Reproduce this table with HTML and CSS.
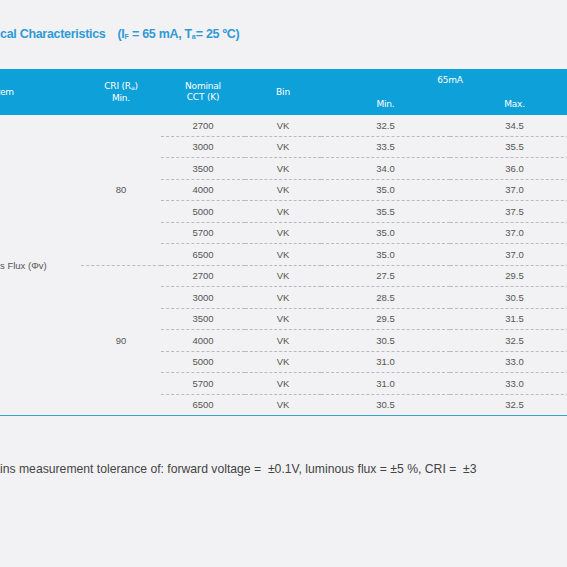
FILE: index.html
```html
<!DOCTYPE html>
<html lang="en">
<head>
<meta charset="utf-8">
<title>Electrical Characteristics</title>
<link rel="stylesheet" href="styles.css">
</head>
<body>
<main class="page">
  <h2 class="title"><span class="cut">Electri</span>cal Characteristics<span class="cond">(I<sub>F</sub> = 65 mA, T<sub>a</sub>= 25 ºC)</span></h2>
  <table class="spec">
    <thead>
      <tr>
        <th class="c-item" rowspan="2"><span class="cut">It</span>em</th>
        <th class="c-cri" rowspan="2">CRI (R<sub>a</sub>)<br>Min.</th>
        <th class="c-cct" rowspan="2">Nominal<br>CCT (K)</th>
        <th class="c-bin" rowspan="2">Bin</th>
        <th colspan="2">65mA</th>
      </tr>
      <tr>
        <th class="c-min">Min.</th>
        <th class="c-max">Max.</th>
      </tr>
    </thead>
    <tbody>
      <tr><td class="c-item" rowspan="14"><span class="cut">Luminou</span>s Flux (Φv)</td><td class="grp" rowspan="7">80</td><td>2700</td><td>VK</td><td>32.5</td><td>34.5</td></tr>
      <tr><td>3000</td><td>VK</td><td>33.5</td><td>35.5</td></tr>
      <tr><td>3500</td><td>VK</td><td>34.0</td><td>36.0</td></tr>
      <tr><td>4000</td><td>VK</td><td>35.0</td><td>37.0</td></tr>
      <tr><td>5000</td><td>VK</td><td>35.5</td><td>37.5</td></tr>
      <tr><td>5700</td><td>VK</td><td>35.0</td><td>37.0</td></tr>
      <tr><td>6500</td><td>VK</td><td>35.0</td><td>37.0</td></tr>
      <tr><td class="grp grp-last" rowspan="7">90</td><td>2700</td><td>VK</td><td>27.5</td><td>29.5</td></tr>
      <tr><td>3000</td><td>VK</td><td>28.5</td><td>30.5</td></tr>
      <tr><td>3500</td><td>VK</td><td>29.5</td><td>31.5</td></tr>
      <tr><td>4000</td><td>VK</td><td>30.5</td><td>32.5</td></tr>
      <tr><td>5000</td><td>VK</td><td>31.0</td><td>33.0</td></tr>
      <tr><td>5700</td><td>VK</td><td>31.0</td><td>33.0</td></tr>
      <tr class="last"><td>6500</td><td>VK</td><td>30.5</td><td>32.5</td></tr>
    </tbody>
  </table>
  <p class="note"><span class="cut">Note: Nationstar mainta</span>ins measurement tolerance of: forward voltage = &nbsp;±0.1V, luminous flux = ±5 %, CRI = &nbsp;±3</p>
</main>
</body>
</html>
```
FILE: styles.css
```css
html, body {
  margin: 0;
  padding: 0;
  overflow: hidden;
  background: #f2f2f4;
}
.page {
  width: 579px;
  padding-top: 26px;
  font-family: "Liberation Sans", Arial, sans-serif;
  color: #555;
}
.cut {
  display: inline-block;
  width: 0;
  direction: rtl;
  white-space: nowrap;
}
.title {
  margin: 0;
  height: 16px;
  line-height: 16px;
  font-size: 12.5px;
  font-weight: bold;
  letter-spacing: -0.3px;
  color: #2f9ad6;
  white-space: nowrap;
}
.title .cond {
  margin-left: 12px;
}
.title sub {
  font-size: 7px;
  vertical-align: -1px;
  letter-spacing: 0;
}
.spec {
  margin-top: 27px;
  border-collapse: collapse;
  table-layout: fixed;
  width: 579px;
}
.spec th {
  background: #0ea0d8;
  color: #fff;
  font-family: "DejaVu Sans", sans-serif;
  font-weight: normal;
  font-size: 9px;
  line-height: 11px;
  height: 23px;
  padding: 0;
  text-align: center;
  letter-spacing: -0.2px;
}
.spec th sub {
  font-size: 6px;
  vertical-align: -1px;
}
.spec thead tr:last-child th {
  height: 22px;
  padding-top: 1px;
  vertical-align: middle;
}
.c-item { width: 81px; }
.c-cri { width: 80px; }
.c-cct { width: 84px; }
.c-bin { width: 76px; }
.c-min { width: 130px; }
.c-max { width: 128px; }
.spec th.c-item, .spec td.c-item {
  text-align: left;
  white-space: nowrap;
}
.spec tbody {
  border-bottom: 1.5px solid #3a9fcb;
}
.spec td {
  height: 20.5px;
  padding: 0;
  font-size: 9.5px;
  text-align: center;
  color: #555;
  border-bottom: 1px dashed #bcbcc0;
}
.spec td.c-item {
  border-bottom: none;
}
.spec td.grp-last {
  border-bottom: none;
}
.spec tbody tr.last td,
.spec tbody tr:first-child td.c-item,
.spec td.grp-last {
  border-bottom: 1.5px solid #3a9fcb;
}
.note {
  margin: 45px 0 0;
  line-height: 16px;
  font-size: 12.2px;
  color: #444;
  white-space: nowrap;
}
```
